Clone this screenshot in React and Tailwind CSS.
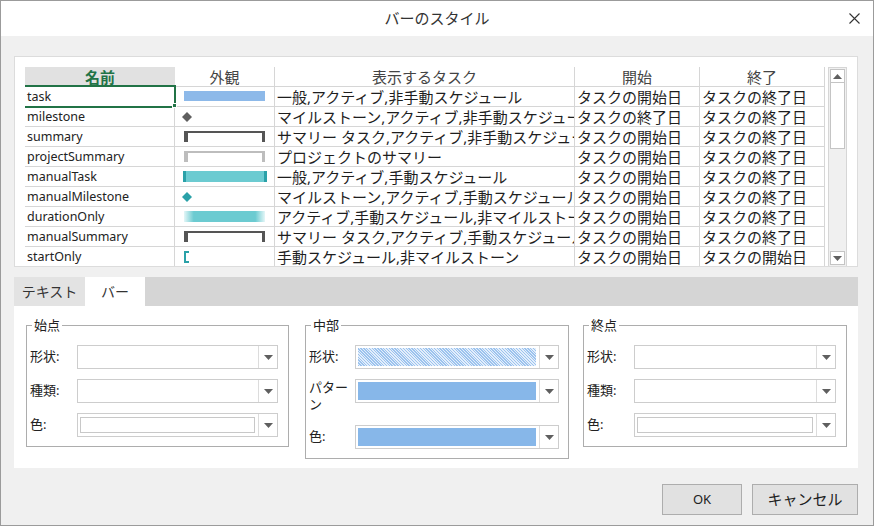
import React from "react";

const rows = [
  { name: "task", kind: "task", tasks: "一般,アクティブ,非手動スケジュール", start: "タスクの開始日", end: "タスクの終了日" },
  { name: "milestone", kind: "milestone", tasks: "マイルストーン,アクティブ,非手動スケジュール", start: "タスクの終了日", end: "タスクの終了日" },
  { name: "summary", kind: "summary", tasks: "サマリー タスク,アクティブ,非手動スケジュール", start: "タスクの開始日", end: "タスクの終了日" },
  { name: "projectSummary", kind: "projectSummary", tasks: "プロジェクトのサマリー", start: "タスクの開始日", end: "タスクの終了日" },
  { name: "manualTask", kind: "manualTask", tasks: "一般,アクティブ,手動スケジュール", start: "タスクの開始日", end: "タスクの終了日" },
  { name: "manualMilestone", kind: "manualMilestone", tasks: "マイルストーン,アクティブ,手動スケジュール", start: "タスクの開始日", end: "タスクの終了日" },
  { name: "durationOnly", kind: "durationOnly", tasks: "アクティブ,手動スケジュール,非マイルストーン", start: "タスクの開始日", end: "タスクの終了日" },
  { name: "manualSummary", kind: "summary", tasks: "サマリー タスク,アクティブ,手動スケジュール", start: "タスクの開始日", end: "タスクの終了日" },
  { name: "startOnly", kind: "startOnly", tasks: "手動スケジュール,非マイルストーン", start: "タスクの開始日", end: "タスクの開始日" },
];

function Bracket({ color }) {
  return (
    <g fill={color}>
      <rect x="9" y="4" width="81" height="2" />
      <rect x="9" y="4" width="4" height="11" />
      <rect x="87" y="4" width="3" height="11" />
    </g>
  );
}

// little bar drawings for the 外観 column
function Appearance({ kind }) {
  return (
    <svg width="99" height="19" viewBox="0 0 99 19">
      <defs>
        <linearGradient id="dur" x1="0" x2="1" y1="0" y2="0">
          <stop offset="0" stopColor="#e4f6f7" />
          <stop offset="0.12" stopColor="#6ccbd1" />
          <stop offset="0.88" stopColor="#6ccbd1" />
          <stop offset="1" stopColor="#e4f6f7" />
        </linearGradient>
      </defs>
      {kind === "task" && <rect x="9" y="4" width="81" height="10" fill="#8db9e9" />}
      {kind === "milestone" && <polygon points="12,5 17,10 12,15 7,10" fill="#5f5f5f" />}
      {kind === "summary" && <Bracket color="#555555" />}
      {kind === "projectSummary" && <Bracket color="#bdbdbd" />}
      {kind === "manualTask" && (
        <g>
          <rect x="8" y="4" width="84" height="11" fill="#6ccbd1" />
          <rect x="8" y="4" width="3" height="11" fill="#2aa1a8" />
          <rect x="89" y="4" width="3" height="11" fill="#2aa1a8" />
        </g>
      )}
      {kind === "manualMilestone" && <polygon points="12,5 17,10 12,15 7,10" fill="#2aa1a8" />}
      {kind === "durationOnly" && <rect x="9" y="4" width="81" height="11" fill="url(#dur)" />}
      {kind === "startOnly" && (
        <g fill="#2aa1a8">
          <rect x="9" y="4" width="2" height="12" />
          <rect x="9" y="4" width="5" height="2" />
          <rect x="9" y="14" width="5" height="2" />
        </g>
      )}
    </svg>
  );
}

function Arrow({ up }) {
  return (
    <svg width="9" height="5" viewBox="0 0 9 5">
      <polygon points={up ? "0,5 9,5 4.5,0" : "0,0 9,0 4.5,5"} fill="#5f5f5f" />
    </svg>
  );
}

function Combo({ fill }) {
  return (
    <div className="flex-1 h-[24px] border border-[#cdcdcd] bg-white flex">
      <div className="flex-1 flex pl-[2px] pr-[3px] py-[2px]">
        {fill === "box" && <div className="flex-1 my-[1px] border border-[#c8c8c8] bg-white" />}
        {fill === "pattern" && (
          <div className="flex-1 bg-[#b8d5f4] bg-[repeating-linear-gradient(45deg,#9cc3ee_0px,#9cc3ee_1px,#e3eefb_1px,#e3eefb_2px)]" />
        )}
        {fill === "blue" && <div className="flex-1 bg-[#87b7e9]" />}
      </div>
      <div className="w-[19px] border-l border-[#dcdcdc] flex items-center justify-center">
        <Arrow />
      </div>
    </div>
  );
}

function Group({ title, children, className }) {
  return (
    <div className={"relative border border-[#adadad] " + className}>
      <span className="absolute -top-[10px] left-[5px] bg-white px-[2px] text-[13px] leading-[18px] text-[#222]">{title}</span>
      {children}
    </div>
  );
}

function Field({ label, fill, labelW }) {
  return (
    <div className="flex items-center">
      <div className={"text-[13px] text-[#222] " + labelW}>{label}</div>
      <Combo fill={fill} />
    </div>
  );
}

export default function App() {
  const cell = "h-[20px] leading-[20px] whitespace-nowrap overflow-hidden border-b border-r border-[#d6d6d6]";

  return (
    <div className="w-[874px] h-[526px] border border-[#9b9b9b] bg-[#f0f0f0] flex flex-col font-['Noto_Sans','Noto_Sans_CJK_JP',sans-serif] text-[#1e1e1e]">
      {/* title bar */}
      <div className="h-[35px] bg-white flex items-center justify-center relative">
        <span className="text-[15px] text-[#333]">バーのスタイル</span>
        <svg className="absolute right-[13px] top-[12px]" width="11" height="11" viewBox="0 0 11 11">
          <path d="M0.5 0.5 L10.5 10.5 M10.5 0.5 L0.5 10.5" stroke="#333" strokeWidth="1.1" />
        </svg>
      </div>

      <div className="flex-1 pl-[13px] pr-[15px] pt-[20px] flex flex-col">
        {/* grid panel */}
        <div className="h-[211px] bg-white border border-[#dcdcdc] pl-[10px] pt-[10px] flex overflow-hidden">
          <div className="relative w-[800px]">
            <div className="flex text-[15px] text-[#444]">
              <div className="w-[150px] h-[20px] leading-[20px] bg-[#e1e1e1] text-center font-bold text-[#217346]">名前</div>
              <div className="w-[100px] h-[20px] leading-[20px] text-center border-r border-b border-[#d6d6d6]">外観</div>
              <div className="w-[300px] h-[20px] leading-[20px] text-center border-r border-b border-[#d6d6d6]">表示するタスク</div>
              <div className="w-[125px] h-[20px] leading-[20px] text-center border-r border-b border-[#d6d6d6]">開始</div>
              <div className="w-[125px] h-[20px] leading-[20px] text-center border-r border-b border-[#d6d6d6]">終了</div>
            </div>
            {rows.map((r) => (
              <div key={r.name} className="flex">
                <div className={"w-[150px] pl-[2px] text-[12.5px] text-[#222] " + cell}>{r.name}</div>
                <div className={"w-[100px] flex items-start " + cell}>
                  <Appearance kind={r.kind} />
                </div>
                <div className={"w-[300px] pl-[2px] text-[15px] " + cell}>{r.tasks}</div>
                <div className={"w-[125px] pl-[2px] text-[15px] " + cell}>{r.start}</div>
                <div className={"w-[125px] pl-[2px] text-[15px] " + cell}>{r.end}</div>
              </div>
            ))}
            {/* selected cell */}
            <div className="absolute top-[18px] left-0 w-[151px] h-[23px] border-2 border-l-0 border-[#217346]" />
            <div className="absolute top-[36px] left-[147px] w-[5px] h-[5px] bg-[#217346] border border-white" />
          </div>
          <div className="ml-[3px] w-[19px] h-[200px] border border-[#d6d6d6] bg-[#f0f0f0] flex flex-col p-[1px]">
            <div className="h-[14px] border border-[#c4c4c4] bg-white flex items-center justify-center">
              <Arrow up />
            </div>
            <div className="h-[66px] border border-t-0 border-[#c4c4c4] bg-white" />
            <div className="flex-1" />
            <div className="h-[14px] border border-[#c4c4c4] bg-white flex items-center justify-center">
              <Arrow />
            </div>
          </div>
        </div>

        {/* tabs */}
        <div className="mt-[10px] h-[29px] bg-[#d5d5d5] flex text-[14px]">
          <div className="w-[71px] bg-[#e3e3e3] flex items-center justify-center text-[#333]">テキスト</div>
          <div className="w-[60px] bg-white flex items-center justify-center text-[#333]">バー</div>
        </div>

        <div className="h-[162px] bg-white pl-[12px] pt-[19px] flex items-start">
          <Group title="始点" className="w-[263px] h-[122px] pl-[3px] pr-[10px] pt-[19px]">
            <div className="flex flex-col gap-[10px]">
              <Field label="形状:" labelW="w-[47px]" />
              <Field label="種類:" labelW="w-[47px]" />
              <Field label="色:" labelW="w-[47px]" fill="box" />
            </div>
          </Group>

          <Group title="中部" className="ml-[16px] w-[264px] h-[134px] pl-[3px] pr-[9px] pt-[19px]">
            <Field label="形状:" labelW="w-[46px]" fill="pattern" />
            <div className="flex items-start mt-[10px]">
              <div className="w-[46px] text-[13px] leading-[17px] text-[#222] pr-[4px]">パターン</div>
              <Combo fill="blue" />
            </div>
            <div className="mt-[12px]">
              <Field label="色:" labelW="w-[46px]" fill="blue" />
            </div>
          </Group>

          <Group title="終点" className="ml-[14px] w-[264px] h-[122px] pl-[3px] pr-[10px] pt-[19px]">
            <div className="flex flex-col gap-[10px]">
              <Field label="形状:" labelW="w-[47px]" />
              <Field label="種類:" labelW="w-[47px]" />
              <Field label="色:" labelW="w-[47px]" fill="box" />
            </div>
          </Group>
        </div>

        {/* buttons */}
        <div className="mt-[16px] flex justify-end gap-[10px]">
          <button className="w-[80px] h-[31px] bg-[#e1e1e1] border border-[#adadad] text-[13px] text-[#222]">OK</button>
          <button className="w-[106px] h-[31px] bg-[#e1e1e1] border border-[#adadad] text-[15px] text-[#222]">キャンセル</button>
        </div>
      </div>
    </div>
  );
}
